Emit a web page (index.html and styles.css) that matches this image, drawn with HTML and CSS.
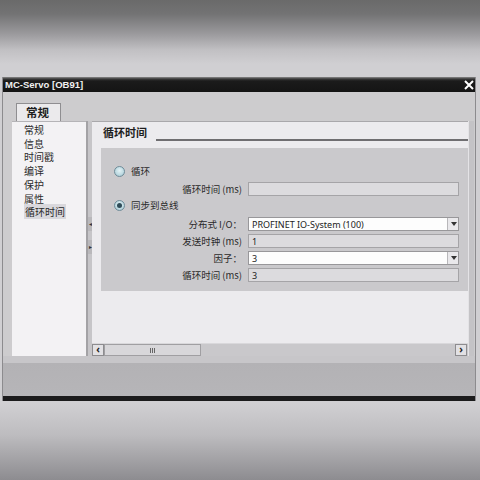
FILE: index.html
```html
<!DOCTYPE html>
<html>
<head>
<meta charset="utf-8">
<link rel="stylesheet" href="styles.css">
</head>
<body>
<div class="page">
  <div class="window">
    <div class="titlebar">
      <span class="title">MC-Servo [OB91]</span>
      <svg class="close" width="10" height="10" viewBox="0 0 10 10"><path d="M1 1 L9 9 M9 1 L1 9" stroke="#fff" stroke-width="2"/></svg>
    </div>
    <div class="body">
      <div class="tabs"><div class="tab">常规</div></div>
      <div class="content">
        <ul class="nav">
          <li>常规</li>
          <li>信息</li>
          <li>时间戳</li>
          <li>编译</li>
          <li>保护</li>
          <li>属性</li>
          <li><span class="sel">循环时间</span></li>
        </ul>
        <div class="splitter">
          <span class="sp-btn">&#9666;</span>
          <span class="sp-btn">&#9656;</span>
        </div>
        <div class="panel">
          <div class="panel-inner">
            <div class="panel-head"><span class="head-text">循环时间</span><i class="rule"></i></div>
            <div class="group">
              <div class="radio r1"><span class="dot"></span><span>循环</span></div>
              <div class="row m4"><span class="lbl">循环时间 (ms)</span><div class="field disabled"></div></div>
              <div class="radio r2"><span class="dot checked"></span><span>同步到总线</span></div>
              <div class="row m5"><span class="lbl">分布式 I/O：</span><div class="field select"><span class="val">PROFINET IO-System (100)</span><span class="arrow"></span></div></div>
              <div class="row m3"><span class="lbl">发送时钟 (ms)</span><div class="field disabled"><span class="val">1</span></div></div>
              <div class="row m3"><span class="lbl">因子：</span><div class="field select"><span class="val">3</span><span class="arrow"></span></div></div>
              <div class="row m3"><span class="lbl">循环时间 (ms)</span><div class="field disabled"><span class="val">3</span></div></div>
            </div>
          </div>
          <div class="hscroll">
            <span class="sbtn">&#8249;</span>
            <span class="thumb"><span class="grip"></span></span>
            <span class="track"></span>
            <span class="sbtn">&#8250;</span>
          </div>
        </div>
        <div class="vstrip"></div>
      </div>
      <div class="footer-light"></div>
      <div class="footer"></div>
    </div>
  </div>
</div>
</body>
</html>
```
FILE: styles.css
```css
* { box-sizing: border-box; }
html, body { margin: 0; padding: 0; }
body {
  width: 480px;
  height: 480px;
  overflow: hidden;
  font-family: "Noto Sans", "Noto Sans CJK SC", sans-serif;
}
.page {
  width: 480px;
  height: 480px;
  padding-top: 77px;
  background: linear-gradient(to bottom, #6a6a6a 0px, #737374 14px, #9b9a9d 34px, #c1c0c3 50px, #d0cfd2 64px, #d0cfd2 404px, #bdbcbf 435px, #8d8c90 480px);
}
.window {
  margin-left: 2px;
  width: 474px;
  height: 324px;
  display: flex;
  flex-direction: column;
  border-left: 1px solid #8c8b8e;
  border-right: 1px solid #8c8b8e;
}
.titlebar {
  height: 15px;
  background: linear-gradient(to bottom, #8a8a8a 0px, #3a3a3a 2px, #1b1b1b 4px, #141414 100%);
  display: flex;
  align-items: center;
  justify-content: space-between;
  padding: 0 1px 0 2px;
}
.title {
  color: #f0f0f0;
  font-family: "Liberation Sans", sans-serif;
  font-weight: bold;
  font-size: 9.5px;
}
.close { margin-top: 1px; }
.body {
  flex: 1;
  background: #cdccce;
  display: flex;
  flex-direction: column;
}
.tabs {
  height: 29px;
  padding-top: 11px;
  padding-left: 13px;
}
.tab {
  width: 45px;
  height: 18px;
  background: #ebeaec;
  border: 1px solid #8f8e91;
  border-bottom: none;
  font-family: "Noto Sans CJK SC", sans-serif;
  font-weight: bold;
  font-size: 11.5px;
  line-height: 16px;
  padding-left: 9px;
  color: #1e1e1e;
}
.content {
  height: 235px;
  display: flex;
  padding-left: 9px;
}
.nav {
  list-style: none;
  margin: 0;
  padding: 1px 0 0 12px;
  width: 74px;
  background: #f3f2f4;
  font-family: "Noto Sans CJK SC", sans-serif;
  font-size: 10px;
  line-height: 13.7px;
  color: #2a2a2a;
  border-top: 1px solid #b5b4b7;
}
.nav .sel { background: #d9d8dc; padding: 0 1px; }
.splitter {
  width: 6px;
  background: #c6c5c8;
  border-left: 2px solid #a3a2a5;
  display: flex;
  flex-direction: column;
  padding-top: 96px;
  gap: 9px;
}
.sp-btn {
  display: block;
  height: 14px;
  background: #b9b8bb;
  font-size: 6px;
  line-height: 14px;
  color: #333;
  text-align: center;
  overflow: hidden;
}
.panel {
  width: 376px;
  background: #ecebee;
  border-top: 1px solid #a9a8ab;
  display: flex;
  flex-direction: column;
}
.panel-inner {
  flex: 1;
  padding-left: 9px;
}
.panel-head {
  height: 19px;
  display: flex;
  align-items: flex-end;
  padding-left: 2px;
  margin-bottom: 7px;
}
.head-text {
  font-family: "Noto Sans CJK SC", sans-serif;
  font-weight: bold;
  font-size: 11px;
  line-height: 14px;
  color: #1e1e1e;
  margin-bottom: 2px;
}
.rule {
  flex: 1;
  height: 2px;
  background: #6f6e71;
  margin-left: 9px;
}
.group {
  background: #cac9cc;
  padding: 16px 9px 9px 13px;
  display: flex;
  flex-direction: column;
  font-family: "Noto Sans CJK SC", sans-serif;
  font-size: 9.5px;
  color: #2a2a2a;
}
.radio {
  height: 14px;
  display: flex;
  align-items: center;
  gap: 6px;
}
.r2 { margin-top: 2px; }
.dot {
  width: 11px;
  height: 11px;
  border-radius: 50%;
  border: 1px solid #6f8c99;
  background: radial-gradient(circle at 50% 40%, #e4f2f5 0, #bcd9e1 60%, #9dbcc7 100%);
  display: inline-flex;
  align-items: center;
  justify-content: center;
}
.dot.checked::after {
  content: "";
  width: 5px;
  height: 5px;
  border-radius: 50%;
  background: #2f4c58;
}
.row {
  height: 14px;
  display: flex;
  align-items: center;
}
.m4 { margin-top: 4px; }
.m5 { margin-top: 5px; }
.m3 { margin-top: 3px; }
.lbl {
  width: 128px;
  text-align: right;
  white-space: nowrap;
}
.field {
  margin-left: 6px;
  width: 211px;
  height: 14px;
  border: 1px solid #a5a4a7;
  display: flex;
  align-items: center;
  font-family: "Noto Sans", sans-serif;
  font-size: 9px;
  color: #222;
}
.field.disabled { background: #dcdbde; }
.field.select { background: #fdfdfd; border-color: #98979a; }
.val { padding-left: 3px; flex: 1; white-space: nowrap; }
.arrow {
  width: 11px;
  height: 12px;
  border-left: 1px solid #b8b7ba;
  background: #e9e8eb;
  position: relative;
}
.arrow::after {
  content: "";
  position: absolute;
  left: 3px;
  top: 4px;
  border-left: 3px solid transparent;
  border-right: 3px solid transparent;
  border-top: 4px solid #333;
}
.hscroll {
  height: 13px;
  display: flex;
  background: #c9c8cb;
  border-top: 1px solid #d9d8db;
}
.sbtn {
  width: 12px;
  height: 12px;
  border: 1px solid #8d8c8f;
  background: #e2e1e4;
  font-size: 10px;
  line-height: 9px;
  text-align: center;
  color: #222;
  font-weight: bold;
}
.thumb {
  width: 97px;
  height: 12px;
  border: 1px solid #a09fa2;
  background: #d8d7da;
  display: flex;
  align-items: center;
  justify-content: center;
}
.grip {
  width: 5px;
  height: 5px;
  background: repeating-linear-gradient(to right, #666 0 1px, transparent 1px 2px);
}
.track { flex: 1; }
.hscroll .sbtn:last-child { margin-right: 1px; }
.vstrip {
  width: 6px;
  background: #c4c3c6;
  border-left: 1px solid #e4e3e6;
}
.footer-light { height: 7px; background: #c7c6c9; }
.footer {
  flex: 1;
  background: linear-gradient(to bottom, #b3b2b5, #b6b5b8);
  border-bottom: 5px solid #1b1b1c;
}
```
